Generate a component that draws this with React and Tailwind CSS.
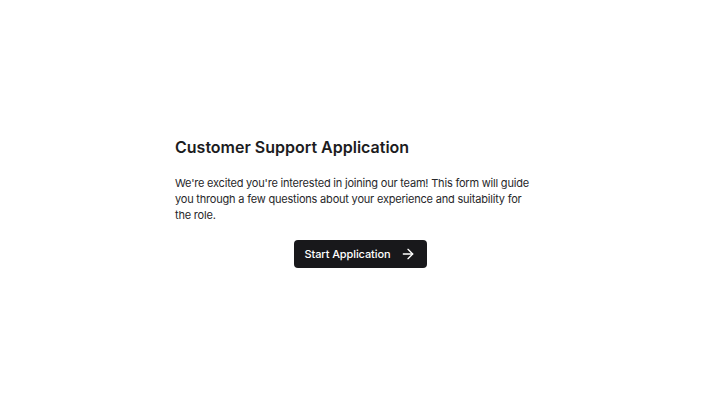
import { ArrowRight } from "lucide-react";

export default function App() {
  return (
    <div className="flex min-h-[405px] w-full items-center justify-center bg-white pb-1 font-['Inter',sans-serif]">
      <div className="w-[370px]">
        <h1 className="text-base font-semibold leading-7 text-[#1c1c1e]">Customer Support Application</h1>
        <p className="mt-3.5 pr-2 text-[11px] leading-4 tracking-[-0.2px] text-[#27272a]">
          We're excited you're interested in joining our team! This form will guide you through a few questions about your experience and suitability for the role.
        </p>
        <div className="mt-[17px] flex justify-center">
          <button
            type="button"
            className="flex h-7 items-center gap-[9px] rounded-[4px] bg-[#18181b] pl-[11px] pr-[11px] text-[11px] font-medium tracking-[-0.1px] text-white"
          >
            Start Application
            <ArrowRight size={16} strokeWidth={2} />
          </button>
        </div>
      </div>
    </div>
  );
}
